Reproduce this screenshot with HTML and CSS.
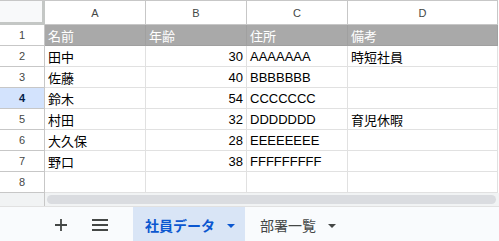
FILE: index.html
```html
<!DOCTYPE html>
<html lang="ja">
<head>
<meta charset="utf-8">
<link rel="stylesheet" href="styles.css">
</head>
<body>
<div class="sheet">
  <div class="grid">
    <div class="corner"></div>
    <div class="colh">A</div>
    <div class="colh">B</div>
    <div class="colh">C</div>
    <div class="colh">D</div>

    <div class="rowh">1</div>
    <div class="cell head">名前</div>
    <div class="cell head">年齢</div>
    <div class="cell head">住所</div>
    <div class="cell head">備考</div>

    <div class="rowh">2</div>
    <div class="cell">田中</div>
    <div class="cell num">30</div>
    <div class="cell">AAAAAAA</div>
    <div class="cell">時短社員</div>

    <div class="rowh">3</div>
    <div class="cell">佐藤</div>
    <div class="cell num">40</div>
    <div class="cell">BBBBBBB</div>
    <div class="cell"></div>

    <div class="rowh sel">4</div>
    <div class="cell">鈴木</div>
    <div class="cell num">54</div>
    <div class="cell">CCCCCCC</div>
    <div class="cell"></div>

    <div class="rowh">5</div>
    <div class="cell">村田</div>
    <div class="cell num">32</div>
    <div class="cell">DDDDDDD</div>
    <div class="cell">育児休暇</div>

    <div class="rowh">6</div>
    <div class="cell">大久保</div>
    <div class="cell num">28</div>
    <div class="cell">EEEEEEEE</div>
    <div class="cell"></div>

    <div class="rowh">7</div>
    <div class="cell">野口</div>
    <div class="cell num">38</div>
    <div class="cell">FFFFFFFFF</div>
    <div class="cell"></div>

    <div class="rowh">8</div>
    <div class="cell"></div>
    <div class="cell"></div>
    <div class="cell"></div>
    <div class="cell"></div>
  </div>
  <div class="hscroll">
    <div class="hs-side"></div>
    <div class="hs-track"><div class="thumb"></div></div>
  </div>
  <div class="tabbar">
    <button class="icon-btn plus" aria-label="シートを追加">
      <svg width="14" height="14" viewBox="0 0 14 14"><path d="M7 1v12M1 7h12" stroke="#444746" stroke-width="1.8" fill="none"/></svg>
    </button>
    <button class="icon-btn menu" aria-label="すべてのシート">
      <svg width="16" height="12" viewBox="0 0 16 12"><path d="M0 1h16M0 6h16M0 11h16" stroke="#444746" stroke-width="1.8" fill="none"/></svg>
    </button>
    <div class="tab active">社員データ<span class="caret"></span></div>
    <div class="tab">部署一覧<span class="caret"></span></div>
  </div>
</div>
</body>
</html>
```
FILE: styles.css
```css
* { box-sizing: border-box; }
html, body { margin: 0; padding: 0; background: #fff; }
body {
  width: 499px;
  height: 241px;
  overflow: hidden;
  font-family: "Liberation Sans", "Noto Sans CJK JP", Arial, sans-serif;
}
.sheet { width: 499px; height: 241px; overflow: hidden; }
.grid {
  display: grid;
  grid-template-columns: 45px 101px 101px 101px 150px;
  grid-template-rows: 24px repeat(8, 21px);
  border-top: 1px solid #c7c7c7;
  width: 498px;
}
.corner {
  background: #f8f9fa;
  border-right: 3px solid #c4c7c5;
  border-bottom: 3px solid #c4c7c5;
}
.colh {
  font-size: 11px;
  color: #444746;
  display: flex;
  align-items: center;
  justify-content: center;
  border-right: 1px solid #c7c7c7;
  border-bottom: 1px solid #c7c7c7;
  padding-top: 1px;
}
.rowh {
  font-size: 11px;
  color: #444746;
  display: flex;
  align-items: center;
  justify-content: center;
  border-right: 1px solid #c7c7c7;
  border-bottom: 1px solid #c7c7c7;
}
.rowh.sel {
  background: #d3e3fd;
  font-weight: bold;
  color: #041e49;
}
.cell {
  font-size: 13px;
  color: #000;
  display: flex;
  align-items: center;
  padding: 0 3px;
  border-right: 1px solid #e1e1e1;
  border-bottom: 1px solid #e1e1e1;
  white-space: nowrap;
  overflow: hidden;
}
.cell.head {
  background: #a9a9a9;
  color: #fff;
  border-right-color: #a0a0a0;
  border-bottom-color: #a0a0a0;
}
.cell.num { justify-content: flex-end; }
.hscroll {
  display: flex;
  height: 14px;
  border-bottom: 1px solid #e1e1e1;
}
.hs-side {
  width: 45px;
  background: #f1f3f4;
  border-right: 1px solid #c7c7c7;
}
.hs-track {
  flex: 1;
  background: #f1f3f4;
  padding: 2px 3px 2px 2px;
}
.thumb {
  height: 9px;
  background: #dadce0;
  border-radius: 5px;
}
.tabbar {
  display: flex;
  align-items: stretch;
  height: 40px;
  background: #f9fbfd;
  padding-left: 47px;
}
.icon-btn {
  border: 0;
  background: transparent;
  width: 28px;
  height: 36px;
  display: flex;
  align-items: center;
  justify-content: center;
  padding: 0;
  flex: none;
}
.icon-btn.menu { margin-left: 11px; margin-right: 19px; }
.tab {
  height: 36px;
  display: flex;
  align-items: center;
  font-size: 14px;
  color: #444746;
  padding: 0 12px 0 15px;
  white-space: nowrap;
  flex: none;
}
.tab.active {
  background: #d9e5f6;
  color: #0b57d0;
  font-weight: bold;
  width: 112px;
  padding-left: 12px;
  padding-right: 0;
}
.caret {
  width: 0;
  height: 0;
  border-left: 4px solid transparent;
  border-right: 4px solid transparent;
  border-top: 4px solid currentColor;
  margin-left: 12px;
  margin-top: 1px;
}
.tab:not(.active) .caret { border-top-color: #444746; }
```
